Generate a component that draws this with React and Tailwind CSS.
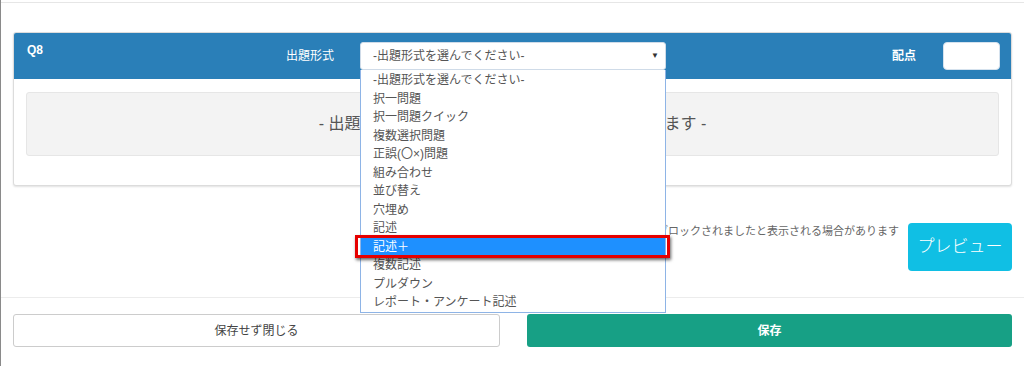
import React from "react";

const options = [
  "-出題形式を選んでください-",
  "択一問題",
  "択一問題クイック",
  "複数選択問題",
  "正誤(〇×)問題",
  "組み合わせ",
  "並び替え",
  "穴埋め",
  "記述",
  "記述＋",
  "複数記述",
  "プルダウン",
  "レポート・アンケート記述",
];

export default function App() {
  return (
    <div
      className="w-[1024px] h-[366px] overflow-hidden bg-white border-l border-[#8a8a8a] text-[#333]"
      style={{ fontFamily: '"Liberation Sans", "Noto Sans CJK JP", sans-serif' }}
    >
      <div className="h-[2px]" />
      <div className="h-px bg-[#e6e6e6]" />
      <div className="px-[12px]">
        {/* Card */}
        <div className="mt-[29px] rounded-[3px] border border-[#dcdcdc] shadow-[0_1px_2px_rgba(0,0,0,0.12)] bg-white">
          <div className="h-[46px] bg-[#2a7fb8] rounded-t-[2px] flex items-center pl-[13px] pr-[11px]">
            <div className="w-[259px] self-start pt-[10px] text-white font-bold text-[12px] leading-[14px]">Q8</div>
            <div className="w-[74px] text-white text-[12px] leading-[16px]">出題形式</div>
            <div className="relative w-[306px] h-[28px]">
              <div className="h-full rounded-[3px] bg-white border border-[#cfdbe8] flex items-center pl-[12px] pr-[6px] text-[12px] text-[#555]">
                <span className="flex-1">-出題形式を選んでください-</span>
                <span className="text-[8px] text-[#333]">▼</span>
              </div>
              {/* Dropdown */}
              <div className="absolute left-0 top-full w-[306px] z-20 bg-white border border-[#8eb4e6] border-t-0 pt-px">
                {options.map((o, i) => (
                  <div
                    key={o}
                    className={
                      i === 9
                        ? "relative h-[18.5px] flex items-center pl-[12px] text-[12px] bg-[#1e90ff] text-white"
                        : "h-[18.5px] flex items-center pl-[12px] text-[12px] text-[#555]"
                    }
                  >
                    {o}
                    {i === 9 && (
                      <div className="absolute -top-[3px] -bottom-[2px] -left-[6px] -right-[5px] border-[3px] border-[#e60000] shadow-[1px_2px_3px_rgba(0,0,0,0.6)]" />
                    )}
                  </div>
                ))}
              </div>
            </div>
            <div className="flex-1" />
            <div className="text-white font-bold text-[12px] leading-[16px] mr-[27px]">配点</div>
            <div className="w-[57px] h-[28px] rounded-[4px] bg-white border border-[#d5e2ee]" />
          </div>
          <div className="px-[12px] pt-[13px] pb-[29px]">
            <div className="h-[64px] rounded-[3px] bg-[#f3f3f3] border border-[#e6e6e6] flex items-center justify-center text-[16px] text-[#555]">
              - 出題形式を選択すると問題の入力欄が表示されます -
            </div>
          </div>
        </div>
        {/* Note + preview */}
        <div className="mt-[37px] flex justify-end items-start">
          <div className="text-[11px] leading-[16px] text-[#666] mr-[9px]">
            ※ブラウザによってはポップアップがブロックされましたと表示される場合があります
          </div>
          <button className="w-[104px] h-[48px] rounded-[4px] bg-[#10bfe4] text-white text-[17px] font-light">
            プレビュー
          </button>
        </div>
      </div>
      <div className="mt-[26px] h-px bg-[#ececec]" />
      <div className="px-[12px] mt-[16px] flex gap-[27px]">
        <button className="flex-1 h-[33px] rounded-[3px] border border-[#cccccc] bg-white text-[12px] text-[#444]">
          保存せず閉じる
        </button>
        <button className="flex-1 h-[33px] rounded-[3px] bg-[#17a085] text-white text-[12px] font-bold">
          保存
        </button>
      </div>
    </div>
  );
}
